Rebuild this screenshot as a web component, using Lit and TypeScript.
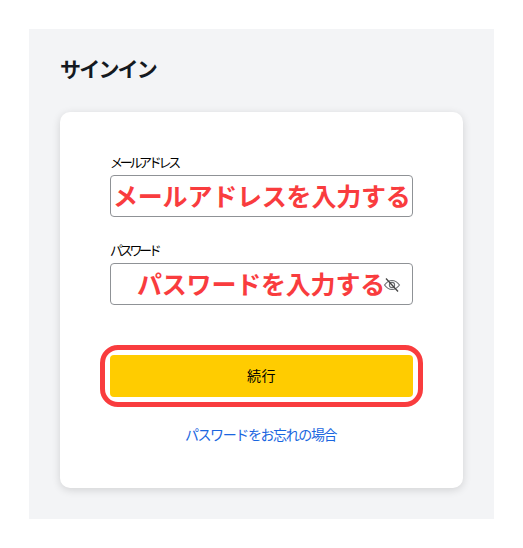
import { LitElement, html, css } from "lit";
import { customElement } from "lit/decorators.js";

@customElement("app-root")
export class AppRoot extends LitElement {
  static styles = css`
    :host {
      display: block;
      width: 523px;
      height: 548px;
      box-sizing: border-box;
      padding: 29px;
      background: #fff;
      font-family: "Noto Sans CJK JP", "Noto Sans", sans-serif;
      color: #0f1419;
    }
    .panel {
      width: 465px;
      height: 490px;
      box-sizing: border-box;
      padding: 25px 31px 0;
      background: #f3f4f6;
    }
    h1 {
      margin: 0;
      height: 28px;
      line-height: 28px;
      font-size: 21px;
      font-weight: 700;
      letter-spacing: -1.8px;
      color: #14191f;
    }
    .card {
      width: 403px;
      height: 376px;
      box-sizing: border-box;
      margin-top: 30px;
      padding: 41px 50px 0;
      background: #fff;
      border-radius: 10px;
      box-shadow: 0 2px 8px rgba(0, 0, 0, 0.14);
      display: flex;
      flex-direction: column;
    }
    label {
      display: block;
      height: 22px;
      line-height: 18px;
      font-size: 13px;
      font-weight: 400;
      letter-spacing: -3.3px;
      color: #000;
    }
    .field {
      margin-bottom: 24px;
    }
    .box {
      height: 42px;
      box-sizing: border-box;
      border: 1px solid #8f9296;
      border-radius: 4px;
      background: #fff;
      display: flex;
      align-items: center;
      position: relative;
      color: #f93c3e;
      font-size: 25px;
      line-height: 38px;
      font-weight: 700;
      white-space: nowrap;
      letter-spacing: -0.2px;
      padding-bottom: 2px;
    }
    .email {
      padding-left: 2px;
    }
    .pass {
      padding-left: 26px;
    }
    .eye {
      position: absolute;
      left: 272px;
      top: 12px;
      width: 18px;
      height: 18px;
    }
    .cta {
      margin-top: 26px;
      margin-bottom: 28px;
      position: relative;
    }
    .cta::after {
      content: "";
      position: absolute;
      inset: -10px;
      border: 5px solid #f93c3e;
      border-radius: 18px;
    }
    button {
      display: block;
      width: 100%;
      height: 42px;
      border: 0;
      border-radius: 4px;
      background: #ffcc00;
      color: #000;
      font: inherit;
      font-size: 14px;
      line-height: 40px;
      padding: 0 0 2px;
      letter-spacing: 0.5px;
    }
    a {
      align-self: center;
      color: #1a66e0;
      text-decoration: none;
      font-size: 14px;
      font-weight: 400;
      letter-spacing: -1.4px;
      line-height: 20px;
      margin-top: -1px;
      margin-left: -2px;
    }
  `;

  render() {
    return html`
      <div class="panel">
        <h1>サインイン</h1>
        <div class="card">
          <div class="field">
            <label>メールアドレス</label>
            <div class="box email">メールアドレスを入力する</div>
          </div>
          <div class="field">
            <label>パスワード</label>
            <div class="box pass">
              パスワードを入力する
              <svg class="eye" viewBox="0 0 18 18" fill="none" stroke="#6a6d70" stroke-width="1.1">
                <path d="M1.500 9c2.200-3 4.600-4.500 7.500-4.500S14.300 6 16.500 9c-2.200 3-4.600 4.500-7.500 4.500S3.700 12 1.500 9z" />
                <circle cx="9" cy="9" r="2.600" />
                <path d="M3 2.500l12 13" stroke="#444" stroke-width="1.300" />
              </svg>
            </div>
          </div>
          <div class="cta"><button>続行</button></div>
          <a href="#">パスワードをお忘れの場合</a>
        </div>
      </div>
    `;
  }
}
